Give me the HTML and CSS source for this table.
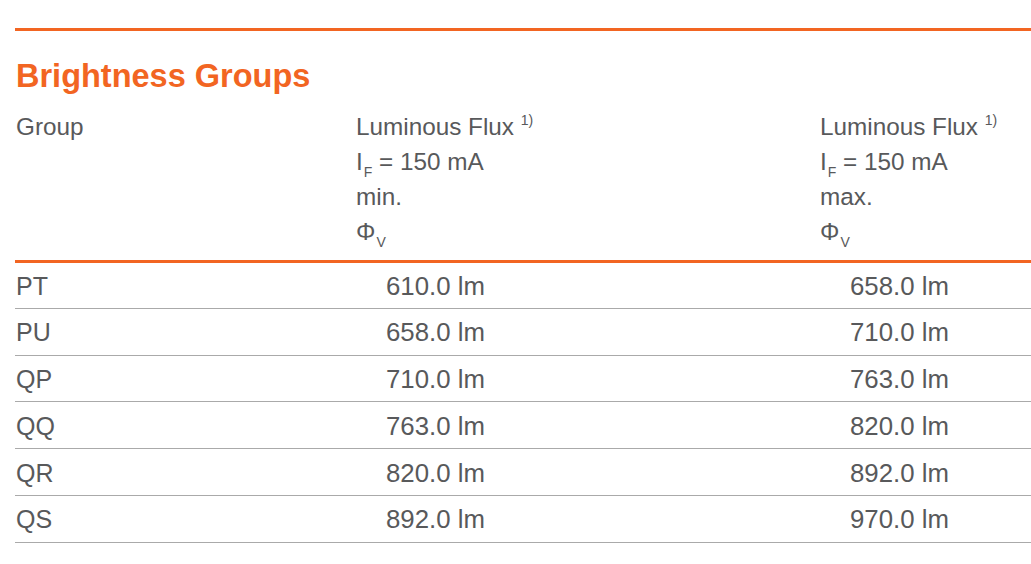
FILE: index.html
```html
<!DOCTYPE html>
<html>
<head>
<meta charset="utf-8">
<link rel="stylesheet" href="styles.css">
</head>
<body>
<div class="wrap">
  <div class="rule"></div>
  <h2 class="title">Brightness Groups</h2>
  <table class="groups">
    <colgroup>
      <col class="c1"><col class="c2"><col class="c3">
    </colgroup>
    <thead>
      <tr>
        <th>Group</th>
        <th>Luminous Flux <sup>1)</sup><br>I<sub>F</sub> = 150 mA<br>min.<br>Φ<sub>V</sub></th>
        <th>Luminous Flux <sup>1)</sup><br>I<sub>F</sub> = 150 mA<br>max.<br>Φ<sub>V</sub></th>
      </tr>
    </thead>
    <tbody>
      <tr><td>PT</td><td class="num">610.0 lm</td><td class="num">658.0 lm</td></tr>
      <tr><td>PU</td><td class="num">658.0 lm</td><td class="num">710.0 lm</td></tr>
      <tr><td>QP</td><td class="num">710.0 lm</td><td class="num">763.0 lm</td></tr>
      <tr><td>QQ</td><td class="num">763.0 lm</td><td class="num">820.0 lm</td></tr>
      <tr><td>QR</td><td class="num">820.0 lm</td><td class="num">892.0 lm</td></tr>
      <tr><td>QS</td><td class="num">892.0 lm</td><td class="num">970.0 lm</td></tr>
    </tbody>
  </table>
</div>
</body>
</html>
```

FILE: styles.css
```css
html, body {
  margin: 0;
  padding: 0;
  background: #ffffff;
}
body {
  font-family: "Liberation Sans", Arial, sans-serif;
  color: #58595b;
  overflow: hidden;
}
.wrap {
  margin-left: 15px;
  padding-top: 28px;
  width: 1016px;
}
.rule {
  height: 3px;
  background: #f26522;
}
.title {
  margin: 27px 0 0 1px;
  font-size: 32.5px;
  line-height: 36px;
  font-weight: bold;
  color: #f26522;
}
.groups {
  width: 1016px;
  border-collapse: collapse;
  table-layout: fixed;
  margin-top: 15px;
  font-size: 24.3px;
}
.c1 { width: 341px; }
.c2 { width: 464px; }
.c3 { width: 211px; }
.groups th {
  text-align: left;
  font-weight: normal;
  vertical-align: top;
  line-height: 35px;
  padding: 0 0 11px 0;
  border-bottom: 3px solid #f26522;
}
.groups th:first-child {
  padding-left: 1px;
}
.groups sup {
  font-size: 14px;
  vertical-align: 0;
  position: relative;
  top: -10px;
  line-height: 0;
}
.groups sub {
  font-size: 14px;
  vertical-align: 0;
  position: relative;
  top: 7px;
  line-height: 0;
  margin-left: 1px;
}
.groups td {
  height: 46.8px;
  padding: 1px 0 0 0;
  box-sizing: border-box;
  font-size: 25px;
  line-height: 26px;
  vertical-align: middle;
  border-bottom: 1px solid #aaaaaa;
}
.groups td:first-child {
  padding-left: 1px;
}
.groups td.num {
  padding-left: 30px;
  font-size: 25.8px;
}
```
